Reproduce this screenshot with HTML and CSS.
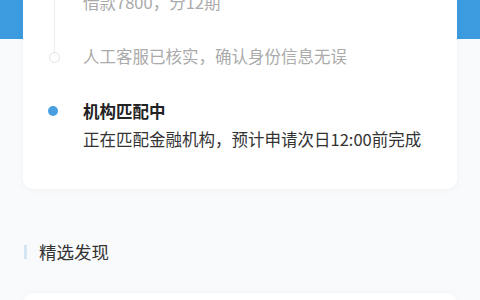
FILE: index.html
```html
<!DOCTYPE html>
<html lang="zh-CN">
<head>
<meta charset="utf-8">
<link rel="stylesheet" href="styles.css">
</head>
<body>
<div class="header"></div>
<div class="card progress">
  <ul class="timeline">
    <li class="step done first">
      <p class="desc">借款7800，分12期</p>
    </li>
    <li class="step done">
      <p class="desc">人工客服已核实，确认身份信息无误</p>
    </li>
    <li class="step current">
      <p class="title">机构匹配中</p>
      <p class="desc">正在匹配金融机构，预计申请次日12:00前完成</p>
    </li>
  </ul>
</div>
<div class="section-title">精选发现</div>
<div class="card next"></div>
</body>
</html>
```
FILE: styles.css
```css
* { box-sizing: border-box; }
html, body { margin: 0; padding: 0; }
body {
  width: 480px;
  height: 300px;
  overflow: hidden;
  background: #f9fafb;
  font-family: "Noto Sans CJK SC", "Noto Sans", sans-serif;
}
.header {
  height: 39px;
  background: #3d9be0;
}
.card {
  margin: 0 23px;
  background: #fff;
  border-radius: 10px;
  box-shadow: 0 1px 8px rgba(0, 0, 0, 0.04);
}
.progress {
  margin-top: -101px;
  padding: 52px 0 38px 60px;
}
.timeline {
  list-style: none;
  margin: 0;
  padding: 0;
  position: relative;
}
.timeline::before {
  content: "";
  position: absolute;
  left: -29.5px;
  top: -60px;
  height: 130px;
  width: 1px;
  background: #ececec;
}
.step { position: relative; }
.step + .step { margin-top: 30px; }
.step.current { margin-top: 31px; }
.step p { margin: 0; font-size: 16.5px; line-height: 24px; }
.step.done .desc { color: #aaaaaa; }
.step.done:not(.first)::before {
  content: "";
  position: absolute;
  left: -34px;
  top: 8px;
  width: 9px;
  height: 9px;
  border: 1px solid #e2e2e2;
  border-radius: 50%;
  background: #fff;
}
.step.current::before {
  content: "";
  position: absolute;
  left: -35px;
  top: 7px;
  width: 10px;
  height: 10px;
  border-radius: 50%;
  background: #4a9fe0;
}
.step .title {
  color: #222;
  font-weight: 700;
}
.step.current .desc {
  color: #333;
  margin-top: 4px;
}
.section-title {
  margin: 56px 0 0 24px;
  padding-left: 12px;
  border-left: 3px solid #d2e7f3;
  height: 14px;
  line-height: 14px;
  font-size: 17.5px;
  color: #333;
}
.next {
  margin-top: 34px;
  height: 60px;
}
```
